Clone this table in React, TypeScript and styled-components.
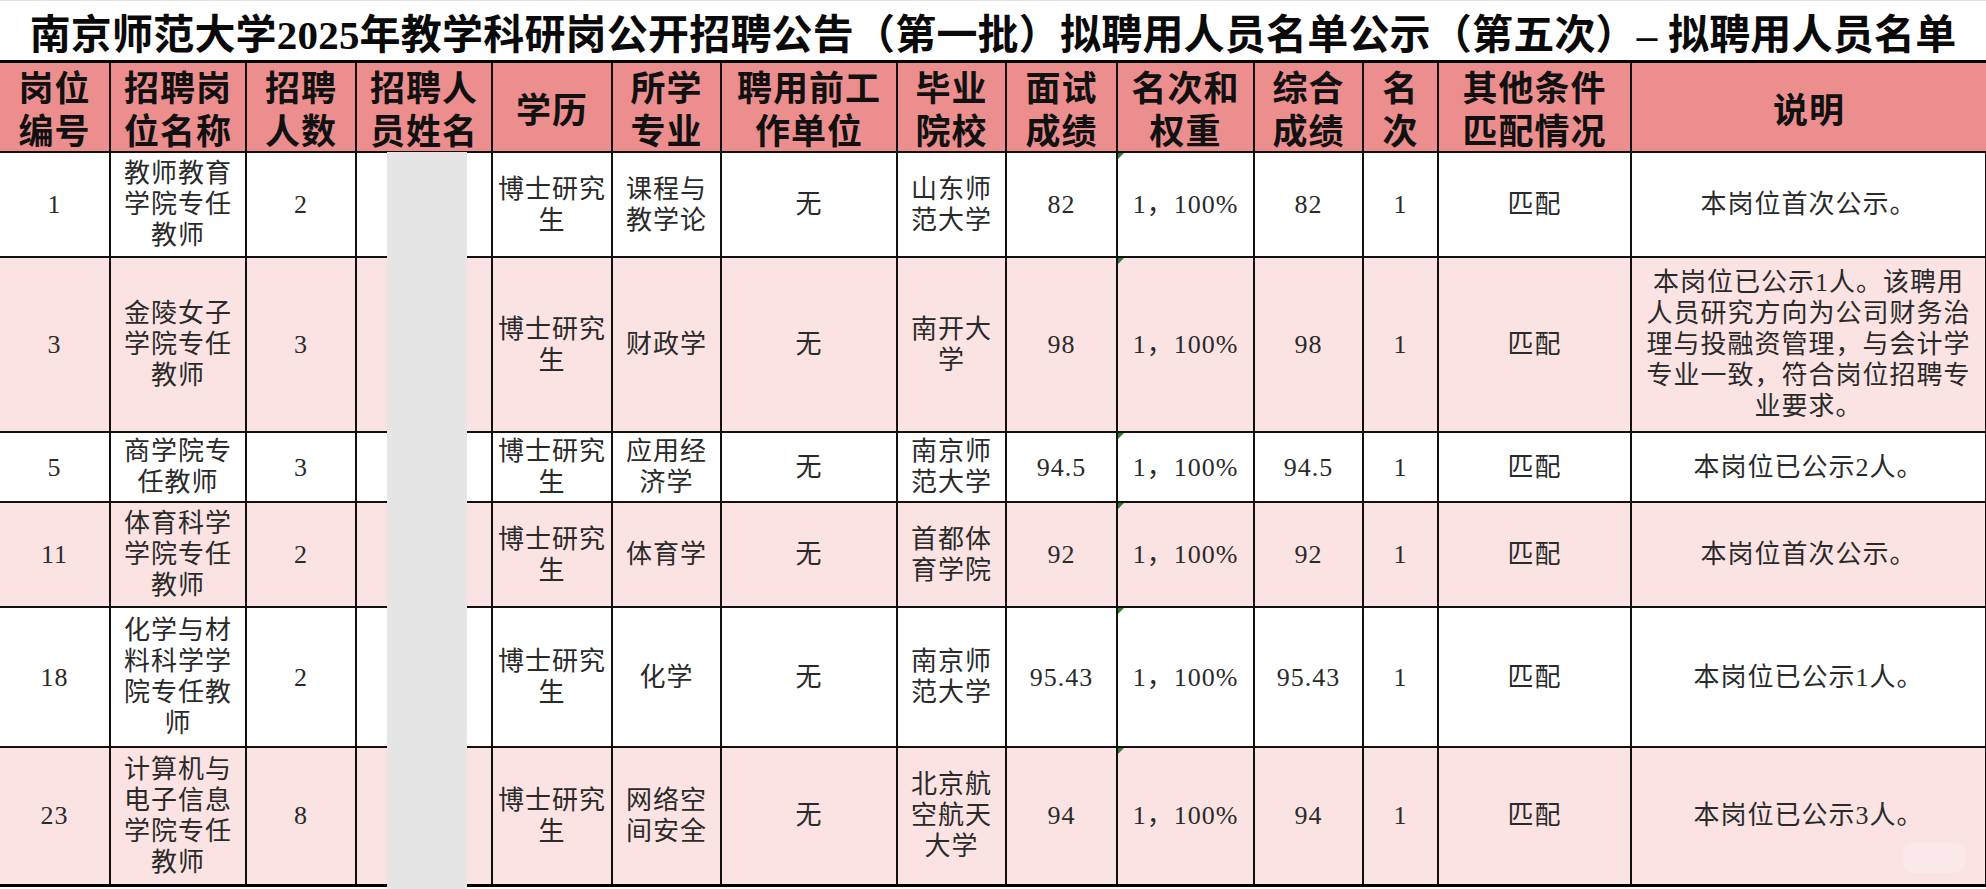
import React from "react";
import styled, { createGlobalStyle } from "styled-components";

const GlobalStyle = createGlobalStyle`
  html, body {
    margin: 0;
    padding: 0;
    background: #ffffff;
  }
`;

const columns = [110, 136, 110, 136, 120, 109, 176, 109, 111, 137, 109, 75, 193, 355];

const headers = [
  "岗位\n编号",
  "招聘岗\n位名称",
  "招聘\n人数",
  "招聘人\n员姓名",
  "学历",
  "所学\n专业",
  "聘用前工\n作单位",
  "毕业\n院校",
  "面试\n成绩",
  "名次和\n权重",
  "综合\n成绩",
  "名\n次",
  "其他条件\n匹配情况",
  "说明",
];

const rows = [
  {
    height: 105,
    cells: ["1", "教师教育\n学院专任\n教师", "2", "", "博士研究\n生", "课程与\n教学论", "无", "山东师\n范大学", "82", "1，100%", "82", "1", "匹配", "本岗位首次公示。"],
  },
  {
    height: 175,
    cells: [
      "3", "金陵女子\n学院专任\n教师", "3", "", "博士研究\n生", "财政学", "无", "南开大\n学", "98", "1，100%", "98", "1", "匹配",
      "本岗位已公示1人。该聘用\n人员研究方向为公司财务治\n理与投融资管理，与会计学\n专业一致，符合岗位招聘专\n业要求。",
    ],
  },
  {
    height: 70,
    cells: ["5", "商学院专\n任教师", "3", "", "博士研究\n生", "应用经\n济学", "无", "南京师\n范大学", "94.5", "1，100%", "94.5", "1", "匹配", "本岗位已公示2人。"],
  },
  {
    height: 105,
    cells: ["11", "体育科学\n学院专任\n教师", "2", "", "博士研究\n生", "体育学", "无", "首都体\n育学院", "92", "1，100%", "92", "1", "匹配", "本岗位首次公示。"],
  },
  {
    height: 140,
    cells: ["18", "化学与材\n料科学学\n院专任教\n师", "2", "", "博士研究\n生", "化学", "无", "南京师\n范大学", "95.43", "1，100%", "95.43", "1", "匹配", "本岗位已公示1人。"],
  },
  {
    height: 138,
    cells: ["23", "计算机与\n电子信息\n学院专任\n教师", "8", "", "博士研究\n生", "网络空\n间安全", "无", "北京航\n空航天\n大学", "94", "1，100%", "94", "1", "匹配", "本岗位已公示3人。"],
  },
];

// column index of 名次和权重, flagged with the little green corner
const FLAGGED_COLUMN = 9;

export default function App() {
  return (
    <>
      <GlobalStyle />
      <Sheet>
        <Title>南京师范大学2025年教学科研岗公开招聘公告（第一批）拟聘用人员名单公示（第五次）– 拟聘用人员名单</Title>
        <Table>
          <colgroup>
            {columns.map((w, i) => (
              <col key={i} style={{ width: w }} />
            ))}
          </colgroup>
          <thead>
            <tr>
              {headers.map((h) => (
                <HeadCell key={h}>{h}</HeadCell>
              ))}
            </tr>
          </thead>
          <tbody>
            {rows.map((row, r) => (
              <BodyRow key={r} $pink={r % 2 === 1} style={{ height: row.height }}>
                {row.cells.map((c, i) => (
                  <Cell key={i} $flag={i === FLAGGED_COLUMN}>
                    {c}
                  </Cell>
                ))}
              </BodyRow>
            ))}
          </tbody>
        </Table>
        <Redaction />
        <Watermark />
      </Sheet>
    </>
  );
}

const Sheet = styled.div`
  position: relative;
  width: 1986px;
  height: 889px;
  overflow: hidden;
  background: #ffffff;
`;

const Title = styled.div`
  height: 59px;
  border-top: 1px solid #e2e2e2;
  display: flex;
  align-items: center;
  justify-content: center;
  font-family: "Liberation Serif", "Noto Sans CJK SC", serif;
  font-weight: 700;
  font-size: 41px;
  color: #0a0a0a;
  white-space: nowrap;
  letter-spacing: 0.2px;
`;

const Table = styled.table`
  width: 1986px;
  table-layout: fixed;
  border-collapse: collapse;
  border-top: 3px solid #000;
  border-bottom: 3px solid #000;
`;

const HeadCell = styled.th`
  height: 88px;
  padding: 0 4px;
  background: #ec8e8e;
  border: 2px solid #111;
  border-top: 3px solid #000;
  font-family: "Noto Sans CJK SC", sans-serif;
  font-weight: 700;
  font-size: 35px;
  line-height: 43px;
  letter-spacing: 1px;
  color: #111;
  white-space: pre-line;
  text-align: center;
  vertical-align: middle;

  &:first-child {
    border-left: none;
  }
  &:last-child {
    border-right: none;
  }
`;

const BodyRow = styled.tr<{ $pink: boolean }>`
  background: ${({ $pink }) => ($pink ? "#fbe3e3" : "#ffffff")};
`;

// the Latin and CJK fonts sit on different metrics, so each line box ends
// up ~2.5px taller than line-height; 31px gives an effective ~33.5px pitch
const Cell = styled.td<{ $flag: boolean }>`
  position: relative;
  padding: 0 4px;
  border: 2px solid #111;
  font-family: "Liberation Serif", "Noto Sans CJK SC", serif;
  font-weight: 400;
  font-size: 26px;
  line-height: 31px;
  letter-spacing: 1px;
  color: #2a2a2a;
  white-space: pre-line;
  text-align: center;
  vertical-align: middle;

  &:first-child {
    border-left: none;
  }
  &:last-child {
    border-right: 2px solid #111;
  }

  &::before {
    content: "";
    display: ${({ $flag }) => ($flag ? "block" : "none")};
    position: absolute;
    top: 0;
    left: 0;
    width: 0;
    height: 0;
    border-top: 6px solid #2f7d32;
    border-right: 6px solid transparent;
  }
`;

const Redaction = styled.div`
  position: absolute;
  top: 152px;
  left: 387px;
  width: 80px;
  bottom: 0;
  background: #e5e5e5;
`;

const Watermark = styled.div`
  position: absolute;
  left: 1903px;
  top: 843px;
  width: 62px;
  height: 30px;
  border-radius: 10px;
  background: rgba(255, 255, 255, 0.18);
`;
